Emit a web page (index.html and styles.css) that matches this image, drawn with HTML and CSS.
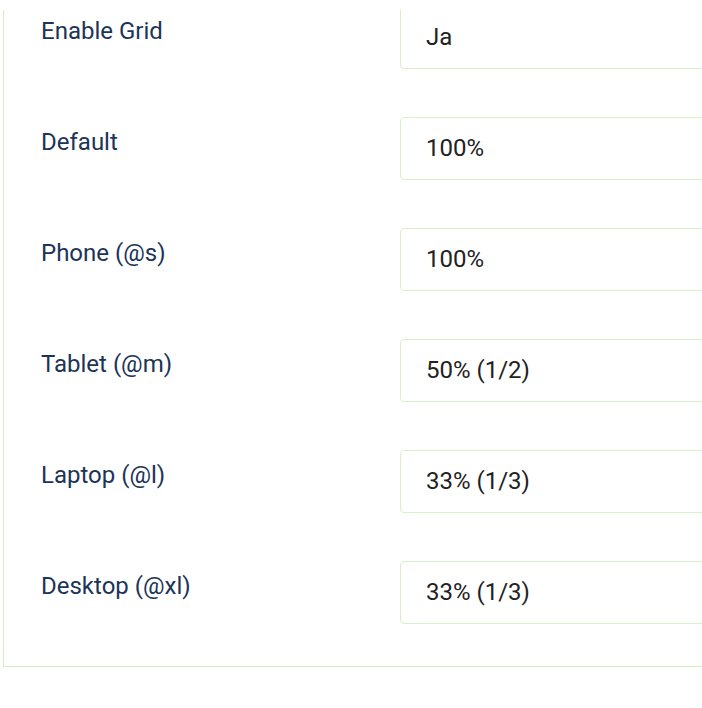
FILE: index.html
```html
<!DOCTYPE html>
<html lang="de">
<head>
<meta charset="utf-8">
<title>Grid</title>
<link rel="stylesheet" href="styles.css">
</head>
<body>
<div class="viewport">
  <div class="panel">
    <div class="row">
      <label class="label">Enable Grid</label>
      <div class="field">Ja</div>
    </div>
    <div class="row">
      <label class="label">Default</label>
      <div class="field">100%</div>
    </div>
    <div class="row">
      <label class="label">Phone (@s)</label>
      <div class="field">100%</div>
    </div>
    <div class="row">
      <label class="label">Tablet (@m)</label>
      <div class="field">50% (1/2)</div>
    </div>
    <div class="row">
      <label class="label">Laptop (@l)</label>
      <div class="field">33% (1/3)</div>
    </div>
    <div class="row">
      <label class="label">Desktop (@xl)</label>
      <div class="field">33% (1/3)</div>
    </div>
  </div>
</div>
</body>
</html>
```

FILE: styles.css
```css
html, body {
  margin: 0;
  padding: 0;
  background: #fff;
  overflow: hidden;
}
body {
  font-family: Roboto, "Liberation Sans", sans-serif;
}
.viewport {
  margin-top: 10px;
  height: 698px;
  overflow: hidden;
  padding-left: 3px;
}
.panel {
  margin-top: -4px;
  width: 760px;
  border-left: 1px solid #d6edc4;
  border-bottom: 1px solid #d6edc4;
  padding: 0 0 42px 37px;
  display: flex;
  flex-direction: column;
  gap: 48px;
}
.row {
  display: flex;
  align-items: flex-start;
}
.label {
  width: 359px;
  flex: none;
  font-size: 24px;
  line-height: 32px;
  padding-top: 9px;
  padding-bottom: 1px;
  color: #1c3458;
}
.field {
  flex: none;
  width: 400px;
  height: 59px;
  box-sizing: content-box;
  border: 1px solid #d9efc9;
  border-radius: 4px;
  padding: 0 25px 2px;
  display: flex;
  align-items: center;
  font-size: 24px;
  color: #222;
}
```
